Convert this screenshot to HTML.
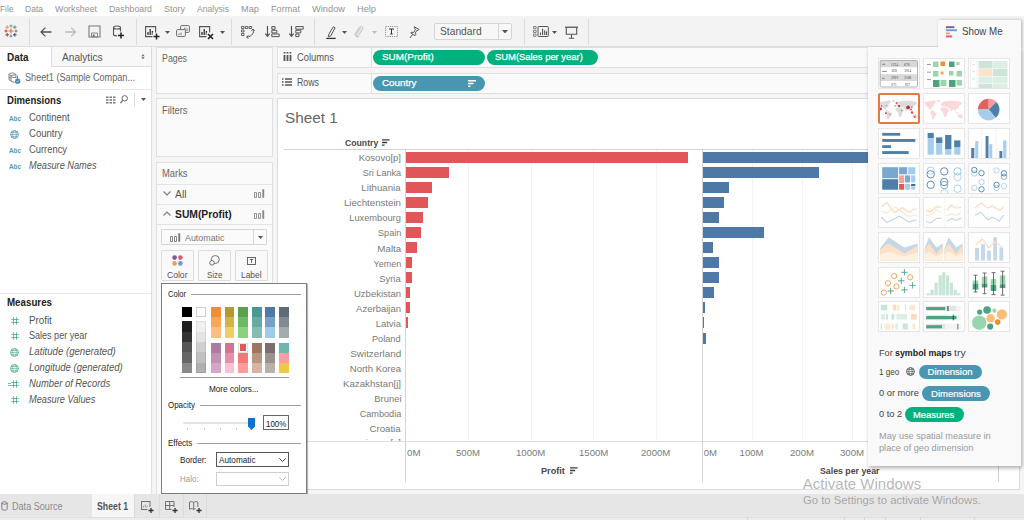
<!DOCTYPE html>
<html>
<head>
<meta charset="utf-8">
<title>Tableau - Sheet 1</title>
<style>
*{box-sizing:border-box;margin:0;padding:0}
html,body{width:1024px;height:520px;overflow:hidden;background:#fff}
body{font-family:"Liberation Sans",sans-serif;font-size:10px;color:#555;position:relative}
.a{position:absolute;display:block}
.t{position:absolute;white-space:nowrap;line-height:1;transform-origin:0 0;display:block}
</style>
</head>
<body>
<!-- s_top -->
<div class="a" style="left:0px;top:0px;width:1024px;height:16px;background:#fff;"></div>
<span class="t" style="top:4.06px;font-size:9.5px;color:#939393;left:0.00px;transform:scaleX(0.8819);">File</span>
<span class="t" style="top:4.06px;font-size:9.5px;color:#939393;left:25.00px;transform:scaleX(0.8970);">Data</span>
<span class="t" style="top:4.06px;font-size:9.5px;color:#939393;left:55.00px;transform:scaleX(0.9285);">Worksheet</span>
<span class="t" style="top:4.06px;font-size:9.5px;color:#939393;left:109.00px;transform:scaleX(0.9252);">Dashboard</span>
<span class="t" style="top:4.06px;font-size:9.5px;color:#939393;left:164.00px;transform:scaleX(0.9471);">Story</span>
<span class="t" style="top:4.06px;font-size:9.5px;color:#939393;left:197.00px;transform:scaleX(0.9046);">Analysis</span>
<span class="t" style="top:4.06px;font-size:9.5px;color:#939393;left:241.00px;transform:scaleX(0.9740);">Map</span>
<span class="t" style="top:4.06px;font-size:9.5px;color:#939393;left:271.00px;transform:scaleX(0.9639);">Format</span>
<span class="t" style="top:4.06px;font-size:9.5px;color:#939393;left:312.00px;transform:scaleX(0.9767);">Window</span>
<span class="t" style="top:4.06px;font-size:9.5px;color:#939393;left:357.00px;transform:scaleX(0.9724);">Help</span>
<div class="a" style="left:0px;top:16px;width:1024px;height:31px;background:#f3f3f3;"></div>
<div class="a" style="left:0px;top:46px;width:1021px;height:1px;background:#dedede;"></div>
<div class="a" style="left:29px;top:19px;width:1px;height:26px;background:#dcdcdc;"></div>
<div class="a" style="left:136px;top:19px;width:1px;height:26px;background:#dcdcdc;"></div>
<div class="a" style="left:231px;top:19px;width:1px;height:26px;background:#dcdcdc;"></div>
<div class="a" style="left:314px;top:19px;width:1px;height:26px;background:#dcdcdc;"></div>
<div class="a" style="left:524px;top:19px;width:1px;height:26px;background:#dcdcdc;"></div>
<div class="a" style="left:588px;top:19px;width:1px;height:26px;background:#dcdcdc;"></div>
<svg class="a" style="left:4px;top:24px;" width="14" height="14" viewBox="0 0 14 14"><path d="M4.4 7H9.6M7 4.4V9.6" stroke="#e8762d" stroke-width="1.2"/><path d="M5.5 2H8.5M7 0.5V3.5" stroke="#59879b" stroke-width="0.85"/><path d="M5.5 12H8.5M7 10.5V13.5" stroke="#59879b" stroke-width="0.85"/><path d="M0.5 7H3.5M2 5.5V8.5" stroke="#c72037" stroke-width="0.85"/><path d="M10.5 7H13.5M12 5.5V8.5" stroke="#5c6692" stroke-width="0.85"/><path d="M1.4000000000000001 3.2H5.0M3.2 1.4000000000000001V5.0" stroke="#eb9129" stroke-width="0.95"/><path d="M9.0 3.2H12.600000000000001M10.8 1.4000000000000001V5.0" stroke="#5b879b" stroke-width="0.95"/><path d="M1.4000000000000001 10.8H5.0M3.2 9.0V12.600000000000001" stroke="#c72037" stroke-width="0.95"/><path d="M9.0 10.8H12.600000000000001M10.8 9.0V12.600000000000001" stroke="#1f457e" stroke-width="0.95"/></svg>
<svg class="a" style="left:40px;top:27px;" width="13" height="10" viewBox="0 0 13 10"><path d="M11.5 5H1.2M5.4 0.6L1 5l4.4 4.4" fill="none" stroke="#555" stroke-width="1.3"/></svg>
<svg class="a" style="left:64px;top:27px;" width="13" height="10" viewBox="0 0 13 10"><path d="M11.5 5H1.2M5.4 0.6L1 5l4.4 4.4" fill="none" stroke="#bdbdbd" stroke-width="1.3" transform="translate(12.5,0) scale(-1,1)"/></svg>
<svg class="a" style="left:88px;top:25px;" width="13" height="13" viewBox="0 0 13 13"><path d="M1 1h11v11H1z" fill="none" stroke="#7a7a7a" stroke-width="1.1"/><path d="M3.5 8h6v4h-6z" fill="none" stroke="#7a7a7a" stroke-width="0.9"/><rect x="4.8" y="9.5" width="1.8" height="2" fill="#666"/></svg>
<svg class="a" style="left:112px;top:25px;" width="13" height="14" viewBox="0 0 13 14"><path d="M1.5 2.5c0-2 7-2 7 0v7.5c-1.5 1.2-5.5 1.2-7 0z M1.5 2.5c0 2 7 2 7 0" fill="none" stroke="#555" stroke-width="1.1"/><rect x="5" y="6.5" width="8" height="8" fill="#f3f3f3"/><path d="M6 10.5h6M9 7.5v6" stroke="#222" stroke-width="1.5"/></svg>
<svg class="a" style="left:145px;top:25.5px;" width="15" height="14" viewBox="0 0 15 14"><path d="M0.6 0.6h10v10h-10z" fill="none" stroke="#555" stroke-width="1.1"/><path d="M3 9V6M5.2 9V3M7.4 9V5" stroke="#333" stroke-width="1.3"/><rect x="7.5" y="6.5" width="8" height="8" fill="#f3f3f3"/><path d="M8.5 10.5h6M11.5 7.5v6" stroke="#222" stroke-width="1.5"/></svg>
<svg class="a" style="left:165px;top:30.5px;" width="5" height="3" viewBox="0 0 5 3"><path d="M0 0h5L2.5 3z" fill="#555"/></svg>
<svg class="a" style="left:176px;top:25px;" width="14" height="12" viewBox="0 0 14 12"><rect x="4.6" y="0.6" width="8.8" height="6.8" rx="1" fill="#f3f3f3" stroke="#6e6e6e" stroke-width="1"/><path d="M7 6V4M9 6V2.5M11 6V3.5" stroke="#6e6e6e" stroke-width="1"/><rect x="0.6" y="4.6" width="8.8" height="6.8" rx="1" fill="#f3f3f3" stroke="#6e6e6e" stroke-width="1"/><path d="M3 10V8.5M5 10V7.5" stroke="#777" stroke-width="1"/></svg>
<svg class="a" style="left:199px;top:25.5px;" width="15" height="14" viewBox="0 0 15 14"><path d="M0.6 0.6h10v10h-10z" fill="none" stroke="#555" stroke-width="1.1"/><path d="M3 9V6M5.2 9V3M7.4 9V5" stroke="#333" stroke-width="1.3"/><rect x="7.5" y="6.5" width="8" height="8" fill="#f3f3f3"/><path d="M9 8l5 5M14 8l-5 5" stroke="#222" stroke-width="1.6"/></svg>
<svg class="a" style="left:219.5px;top:30.5px;" width="5" height="3" viewBox="0 0 5 3"><path d="M0 0h5L2.5 3z" fill="#555"/></svg>
<svg class="a" style="left:241px;top:26px;" width="14" height="13" viewBox="0 0 14 13"><path d="M0.5 0.5h2.5v2h-2.5zM4.3 0.5h2.5v2h-2.5zM8.1 0.5h2.5v2h-2.5zM0.5 4h2.5v2h-2.5zM0.5 7.5h2.5v2h-2.5z" fill="none" stroke="#555" stroke-width="0.9"/><path d="M12 3.5c1.5 3-1 7-6 7.5" fill="none" stroke="#555" stroke-width="1"/><path d="M10.3 4.8L12 3l1.6 2M7.5 9.3L5.5 11l2 1.8" fill="none" stroke="#555" stroke-width="1"/></svg>
<svg class="a" style="left:265px;top:26px;" width="15" height="12" viewBox="0 0 15 12"><path d="M2.5 0v10M0.3 7.6L2.5 10.4 4.7 7.6" fill="none" stroke="#555" stroke-width="1.2"/><path d="M6.8 0.6h3.2v2.6H6.8zM6.8 4.3h5v2.6h-5zM6.8 8h7.4v2.6H6.8z" fill="none" stroke="#555" stroke-width="1"/></svg>
<svg class="a" style="left:289px;top:26px;" width="15" height="12" viewBox="0 0 15 12"><path d="M2.5 0v10M0.3 7.6L2.5 10.4 4.7 7.6" fill="none" stroke="#555" stroke-width="1.2"/><path d="M6.8 0.6h7.4v2.6H6.8zM6.8 4.3h5v2.6h-5zM6.8 8h3.2v2.6H6.8z" fill="none" stroke="#555" stroke-width="1"/></svg>
<svg class="a" style="left:326px;top:26px;" width="11" height="14" viewBox="0 0 11 14"><path d="M7.3 0.8l1.8 1-4.4 8.2-2.3 0.6 0.4-2.4z" fill="none" stroke="#555" stroke-width="1"/><path d="M0.3 12.4h9.4" stroke="#333" stroke-width="1.3"/></svg>
<svg class="a" style="left:342.2px;top:30.5px;" width="5" height="3" viewBox="0 0 5 3"><path d="M0 0h5L2.5 3z" fill="#555"/></svg>
<svg class="a" style="left:354px;top:25.5px;" width="11" height="12" viewBox="0 0 11 12"><path d="M7.6 2.6L3.2 9.2c-0.9 1.4 1 2.5 1.9 1.2l4-6.4c1.2-2-1.6-3.8-2.9-1.8L2 8.600c-1.700 2.800 2.200 5.100 3.900 2.400" fill="none" stroke="#bdbdbd" stroke-width="1" transform="translate(-0.5,-1.2)"/></svg>
<svg class="a" style="left:372.2px;top:30.5px;" width="5" height="3" viewBox="0 0 5 3"><path d="M0 0h5L2.5 3z" fill="#bdbdbd"/></svg>
<svg class="a" style="left:385px;top:26px;" width="13" height="11" viewBox="0 0 13 11"><rect x="0.5" y="0.5" width="12" height="10" fill="none" stroke="#888" stroke-width="0.9" stroke-dasharray="1.2 1"/><path d="M4 3h5M6.5 3v5M5.3 8h2.400" stroke="#333" stroke-width="1" fill="none"/></svg>
<svg class="a" style="left:408.5px;top:25.5px;" width="11" height="13" viewBox="0 0 11 13"><path d="M5.2 0.8l4.800 2.600-1 1.100-1-0.300-1.800 3 0.700 1.600-0.900 0.900L1.700 6.800l1.200-0.600 1.700 0.300 1.800-3-0.600-1z" fill="none" stroke="#555" stroke-width="1"/><path d="M3.700 8.200L1 12" stroke="#555" stroke-width="1"/></svg>
<div class="a" style="left:434px;top:22.5px;width:78px;height:17.5px;background:#f7f7f7;border:1px solid #d4d4d4;border-radius:2px;"></div>
<div class="a" style="left:498px;top:23px;width:1px;height:16.5px;background:#d4d4d4;"></div>
<span class="t" style="top:26.49px;font-size:11px;color:#555;left:440.00px;transform:scaleX(0.9318);">Standard</span>
<svg class="a" style="left:502.3px;top:29.8px;" width="6" height="3.5" viewBox="0 0 6 3.5"><path d="M0 0h6L3 3.500z" fill="#555"/></svg>
<svg class="a" style="left:533px;top:26px;" width="16" height="11" viewBox="0 0 16 11"><path d="M0.500 0.500h2.600v2.200H0.500zM0.500 4.300h2.600v2.200H0.500zM0.500 8.100h2.600v2.200H0.500z" fill="none" stroke="#777" stroke-width="0.900"/><rect x="5" y="0.500" width="10.300" height="10" rx="0.800" fill="none" stroke="#555" stroke-width="1"/><path d="M7.500 9V6.500M9.600 9V2.800M11.700 9V4.300M13.500 9V5.500" stroke="#555" stroke-width="1.100"/></svg>
<svg class="a" style="left:552.3px;top:30.5px;" width="5" height="3" viewBox="0 0 5 3"><path d="M0 0h5L2.5 3z" fill="#555"/></svg>
<svg class="a" style="left:564.5px;top:25.5px;" width="13" height="13" viewBox="0 0 13 13"><path d="M0 1.200h13" stroke="#555" stroke-width="1.300"/><path d="M1.300 1.500v6.800h10.400V1.500" fill="none" stroke="#555" stroke-width="1.100"/><path d="M6.500 8.300v3.700M3.800 12.300h5.400" stroke="#555" stroke-width="1.100"/></svg>
<!-- s_left -->
<div class="a" style="left:0px;top:47px;width:152px;height:447px;background:#fff;border-right:1px solid #e0e0e0;"></div>
<div class="a" style="left:51px;top:47px;width:101px;height:20px;background:#f8f8f8;border-left:1px solid #dcdcdc;border-bottom:1px solid #dcdcdc;border-right:1px solid #dcdcdc;"></div>
<span class="t" style="top:52.64px;font-size:10px;color:#222;font-weight:bold;left:7.00px;transform:scaleX(0.9919);">Data</span>
<span class="t" style="top:52.64px;font-size:10px;color:#555;left:61.50px;transform:scaleX(1.0121);">Analytics</span>
<svg class="a" style="left:141.2px;top:53.7px;" width="4" height="6" viewBox="0 0 4 6"><path d="M2 0.200L3.700 2.300H0.300zM2 5.300L3.700 3.200H0.300z" fill="#666"/></svg>
<svg class="a" style="left:8px;top:71.5px;" width="13" height="12" viewBox="0 0 13 12"><path d="M1 2.300c0-1.700 6.500-1.700 6.500 0v5.500c-1.500 1.200-5 1.200-6.500 0zM1 2.300c0 1.600 6.500 1.600 6.500 0M1 5c0 1.500 6.500 1.500 6.500 0" fill="none" stroke="#777" stroke-width="0.900"/><path d="M3 4.300c0-1.700 6.500-1.700 6.500 0v5c-1.500 1.200-5 1.200-6.500 0zM3 4.300c0 1.600 6.500 1.600 6.500 0" fill="#fff" stroke="#777" stroke-width="0.900"/><circle cx="9.700" cy="9.200" r="2.600" fill="#3a87b5"/><path d="M8.500 9.200l0.900 0.900 1.500-1.700" fill="none" stroke="#fff" stroke-width="0.700"/></svg>
<span class="t" style="top:72.83px;font-size:10px;color:#666;left:25.00px;transform:scaleX(0.9119);">Sheet1 (Sample Compan...</span>
<div class="a" style="left:0px;top:89px;width:151px;height:1px;background:#e8e8e8;"></div>
<span class="t" style="top:95.73px;font-size:10px;color:#222;font-weight:bold;left:7.00px;transform:scaleX(0.9571);">Dimensions</span>
<svg class="a" style="left:105.5px;top:95.6px;" width="10" height="8" viewBox="0 0 10 8"><path d="M0 0.500h2.500v1.500H0zM3.500 0.500h2.500v1.500h-2.500zM7 0.500h2.500v1.500H7zM0 3.300h2.500v1.500H0zM3.500 3.300h2.500v1.500h-2.500zM7 3.300h2.500v1.500H7zM0 6.100h2.500v1.500H0zM3.500 6.100h2.500v1.500h-2.500zM7 6.100h2.500v1.500H7z" fill="#777"/></svg>
<svg class="a" style="left:120.2px;top:94.9px;" width="8" height="9" viewBox="0 0 8 9"><circle cx="4.700" cy="3.300" r="2.700" fill="none" stroke="#666" stroke-width="1"/><path d="M2.800 5.300L0.500 8" stroke="#666" stroke-width="1.200"/></svg>
<div class="a" style="left:134px;top:93px;width:1px;height:14px;background:#dcdcdc;"></div>
<svg class="a" style="left:140.5px;top:98px;" width="5" height="3" viewBox="0 0 5 3"><path d="M0 0h5L2.500 3z" fill="#555"/></svg>
<span class="t" style="top:115.05px;font-size:7.5px;color:#4e9bb5;font-weight:bold;left:9.30px;transform:scaleX(0.8469);">Abc</span>
<span class="t" style="top:113.23px;font-size:10px;color:#555;left:28.75px;transform:scaleX(0.9519);">Continent</span>
<svg class="a" style="left:10px;top:129.7px;" width="9" height="9" viewBox="0 0 9 9"><circle cx="4.5" cy="4.5" r="3.9" fill="none" stroke="#4e9bb5" stroke-width="0.9"/><ellipse cx="4.5" cy="4.5" rx="1.8" ry="3.9" fill="none" stroke="#4e9bb5" stroke-width="0.65"/><path d="M0.6 4.5h7.8M1.200 2.400h6.600M1.200 6.600h6.600" stroke="#4e9bb5" stroke-width="0.600"/></svg>
<span class="t" style="top:129.23px;font-size:10px;color:#555;left:28.75px;transform:scaleX(0.9567);">Country</span>
<span class="t" style="top:146.80px;font-size:7.5px;color:#4e9bb5;font-weight:bold;left:9.30px;transform:scaleX(0.8469);">Abc</span>
<span class="t" style="top:144.98px;font-size:10px;color:#555;left:28.75px;transform:scaleX(0.9367);">Currency</span>
<span class="t" style="top:162.55px;font-size:7.5px;color:#4e9bb5;font-weight:bold;left:9.30px;transform:scaleX(0.8469);">Abc</span>
<span class="t" style="top:160.73px;font-size:10px;color:#555;font-style:italic;left:28.75px;transform:scaleX(0.9201);">Measure Names</span>
<div class="a" style="left:0px;top:293px;width:151px;height:1px;background:#e8e8e8;"></div>
<span class="t" style="top:297.99px;font-size:10px;color:#222;font-weight:bold;left:7.00px;transform:scaleX(0.9753);">Measures</span>
<svg class="a" style="left:11px;top:316.5px;" width="8" height="8" viewBox="0 0 8 8"><path d="M2.500 0.300v7.400M5.500 0.300v7.400M0.300 2.500h7.400M0.300 5.500h7.400" stroke="#4eb08f" stroke-width="0.850"/></svg>
<span class="t" style="top:315.54px;font-size:10px;color:#555;left:28.75px;transform:scaleX(0.9747);">Profit</span>
<svg class="a" style="left:11px;top:332.34999999999997px;" width="8" height="8" viewBox="0 0 8 8"><path d="M2.500 0.300v7.400M5.500 0.300v7.400M0.300 2.500h7.400M0.300 5.500h7.400" stroke="#4eb08f" stroke-width="0.850"/></svg>
<span class="t" style="top:331.38px;font-size:10px;color:#555;left:28.75px;transform:scaleX(0.9034);">Sales per year</span>
<svg class="a" style="left:10px;top:347.7px;" width="9" height="9" viewBox="0 0 9 9"><circle cx="4.5" cy="4.5" r="3.9" fill="none" stroke="#4eb08f" stroke-width="0.9"/><ellipse cx="4.5" cy="4.5" rx="1.8" ry="3.9" fill="none" stroke="#4eb08f" stroke-width="0.65"/><path d="M0.6 4.5h7.8M1.200 2.400h6.600M1.200 6.600h6.600" stroke="#4eb08f" stroke-width="0.600"/></svg>
<span class="t" style="top:347.24px;font-size:10px;color:#555;font-style:italic;left:28.75px;transform:scaleX(0.9632);">Latitude (generated)</span>
<svg class="a" style="left:10px;top:363.55px;" width="9" height="9" viewBox="0 0 9 9"><circle cx="4.5" cy="4.5" r="3.9" fill="none" stroke="#4eb08f" stroke-width="0.9"/><ellipse cx="4.5" cy="4.5" rx="1.8" ry="3.9" fill="none" stroke="#4eb08f" stroke-width="0.65"/><path d="M0.6 4.5h7.8M1.200 2.400h6.600M1.200 6.600h6.600" stroke="#4eb08f" stroke-width="0.600"/></svg>
<span class="t" style="top:363.09px;font-size:10px;color:#555;font-style:italic;left:28.75px;transform:scaleX(0.9526);">Longitude (generated)</span>
<svg class="a" style="left:11px;top:379.9px;" width="8" height="8" viewBox="0 0 8 8"><path d="M2.500 0.300v7.400M5.500 0.300v7.400M0.300 2.500h7.400M0.300 5.500h7.400" stroke="#4eb08f" stroke-width="0.850"/></svg>
<svg class="a" style="left:8px;top:382.9px;" width="3" height="3" viewBox="0 0 3 3"><path d="M0 0.500h3M0 2.500h3" stroke="#4eb08f" stroke-width="0.800"/></svg>
<span class="t" style="top:378.94px;font-size:10px;color:#555;font-style:italic;left:28.75px;transform:scaleX(0.9371);">Number of Records</span>
<svg class="a" style="left:11px;top:395.75px;" width="8" height="8" viewBox="0 0 8 8"><path d="M2.500 0.300v7.400M5.500 0.300v7.400M0.300 2.500h7.400M0.300 5.500h7.400" stroke="#4eb08f" stroke-width="0.850"/></svg>
<span class="t" style="top:394.79px;font-size:10px;color:#555;font-style:italic;left:28.75px;transform:scaleX(0.9215);">Measure Values</span>
<!-- s_cards -->
<div class="a" style="left:152px;top:47px;width:872px;height:447px;background:#f5f5f5;"></div>
<div class="a" style="left:156px;top:47px;width:117px;height:46.5px;background:#fafafa;border:1px solid #e0e0e0;"></div>
<span class="t" style="top:53.53px;font-size:10px;color:#666;left:161.75px;transform:scaleX(0.8817);">Pages</span>
<div class="a" style="left:156px;top:98px;width:117px;height:59px;background:#fafafa;border:1px solid #e0e0e0;"></div>
<span class="t" style="top:105.53px;font-size:10px;color:#666;left:161.75px;transform:scaleX(0.9367);">Filters</span>
<div class="a" style="left:156px;top:161.5px;width:117px;height:335px;background:#fafafa;border:1px solid #e0e0e0;"></div>
<span class="t" style="top:168.53px;font-size:10px;color:#666;left:161.75px;transform:scaleX(0.9367);">Marks</span>
<div class="a" style="left:157px;top:184px;width:115px;height:1px;background:#e4e4e4;"></div>
<div class="a" style="left:157px;top:204px;width:115px;height:1px;background:#e4e4e4;"></div>
<div class="a" style="left:157px;top:224px;width:115px;height:1px;background:#e4e4e4;"></div>
<svg class="a" style="left:163px;top:190.5px;" width="8" height="5" viewBox="0 0 8 5"><path d="M0.500 0.500L4 4l3.500-3.500" fill="none" stroke="#7c7c7c" stroke-width="1.100"/></svg>
<span class="t" style="top:189.11px;font-size:10.5px;color:#555;left:175.00px;transform:scaleX(0.9855);">All</span>
<svg class="a" style="left:254px;top:189px;" width="11" height="9" viewBox="0 0 11 9"><path d="M0.500 3.500h2v5h-2zM4.500 3.500h2v5h-2z" fill="none" stroke="#888" stroke-width="0.900"/><path d="M8.300 0.300h1.900v8.400h-1.900z" fill="#888" stroke="none"/></svg>
<svg class="a" style="left:163px;top:211px;" width="8" height="5" viewBox="0 0 8 5"><path d="M0.500 4.500L4 1l3.500 3.500" fill="none" stroke="#7c7c7c" stroke-width="1.100"/></svg>
<span class="t" style="top:209.41px;font-size:10.5px;color:#222;font-weight:bold;left:175.00px;transform:scaleX(0.9828);">SUM(Profit)</span>
<svg class="a" style="left:254px;top:209.5px;" width="11" height="9" viewBox="0 0 11 9"><path d="M0.500 3.500h2v5h-2zM4.500 3.500h2v5h-2z" fill="none" stroke="#888" stroke-width="0.900"/><path d="M8.300 0.300h1.900v8.400h-1.900z" fill="#888" stroke="none"/></svg>
<div class="a" style="left:161px;top:229px;width:106px;height:16px;background:#fbfbfb;border:1px solid #d6d6d6;border-radius:1px;"></div>
<div class="a" style="left:253px;top:229.5px;width:1px;height:15px;background:#d6d6d6;"></div>
<svg class="a" style="left:169.5px;top:233px;" width="11" height="9" viewBox="0 0 11 9"><path d="M0.500 3.500h2v5h-2zM4.500 3.500h2v5h-2z" fill="none" stroke="#777" stroke-width="0.900"/><path d="M8.300 0.300h1.900v8.400h-1.900z" fill="#777" stroke="none"/></svg>
<span class="t" style="top:232.96px;font-size:9.5px;color:#777;left:184.50px;transform:scaleX(0.9351);">Automatic</span>
<svg class="a" style="left:257.5px;top:236px;" width="5" height="3" viewBox="0 0 5 3"><path d="M0 0h5L2.500 3z" fill="#555"/></svg>
<div class="a" style="left:161px;top:250px;width:32.5px;height:31px;background:#f9f9f9;border:1px solid #dddddd;border-radius:1px;"></div>
<span class="t" style="top:269.76px;font-size:9.5px;color:#555;left:167.00px;transform:scaleX(0.9030);">Color</span>
<div class="a" style="left:198px;top:250px;width:32.5px;height:31px;background:#f9f9f9;border:1px solid #dddddd;border-radius:1px;"></div>
<span class="t" style="top:269.76px;font-size:9.5px;color:#555;left:206.50px;transform:scaleX(0.8387);">Size</span>
<div class="a" style="left:235px;top:250px;width:32.5px;height:31px;background:#f9f9f9;border:1px solid #dddddd;border-radius:1px;"></div>
<span class="t" style="top:269.76px;font-size:9.5px;color:#555;left:241.00px;transform:scaleX(0.8819);">Label</span>
<svg class="a" style="left:171.5px;top:254.5px;" width="11" height="11" viewBox="0 0 11 11"><circle cx="2.600" cy="2.600" r="2.300" fill="#7e5a93"/><circle cx="8.400" cy="2.600" r="2.300" fill="#e0567a"/><circle cx="2.600" cy="8.400" r="2.300" fill="#ee9a5e"/><circle cx="8.400" cy="8.400" r="2.300" fill="#6c9bd0"/></svg>
<svg class="a" style="left:208.5px;top:255px;" width="11" height="11" viewBox="0 0 11 11"><circle cx="6.300" cy="4.500" r="4" fill="none" stroke="#666" stroke-width="0.900"/><circle cx="3" cy="7.800" r="2.300" fill="#f9f9f9" stroke="#666" stroke-width="0.900"/></svg>
<svg class="a" style="left:246.5px;top:256.5px;" width="9" height="8" viewBox="0 0 9 8"><rect x="0.500" y="0.500" width="8" height="7" fill="none" stroke="#555" stroke-width="0.900"/><path d="M2.800 2.500h3.400M4.500 2.500v3.300" stroke="#555" stroke-width="0.900"/></svg>
<div class="a" style="left:277px;top:47px;width:743px;height:20.5px;background:#fafafa;border:1px solid #e0e0e0;"></div>
<div class="a" style="left:371px;top:48px;width:1px;height:18.5px;background:#e0e0e0;"></div>
<span class="t" style="top:52.73px;font-size:10px;color:#555;left:296.50px;transform:scaleX(0.9377);">Columns</span>
<div class="a" style="left:277px;top:72.5px;width:743px;height:21px;background:#fafafa;border:1px solid #e0e0e0;"></div>
<div class="a" style="left:371px;top:73.5px;width:1px;height:19px;background:#e0e0e0;"></div>
<span class="t" style="top:78.23px;font-size:10px;color:#555;left:296.50px;transform:scaleX(0.8798);">Rows</span>
<svg class="a" style="left:282.5px;top:51.5px;" width="9" height="9" viewBox="0 0 9 9"><path d="M1.500 0v1.500M4.500 0v1.500M7.500 0v1.500" stroke="#555" stroke-width="1.800"/><path d="M1.500 3v6M4.500 3v6M7.500 3v6" stroke="#555" stroke-width="1.800"/></svg>
<svg class="a" style="left:282px;top:78.3px;" width="10" height="8" viewBox="0 0 10 8"><path d="M0 1h1.500M0 4h1.500M0 7h1.500" stroke="#555" stroke-width="1.600"/><path d="M3 1h7M3 4h7M3 7h7" stroke="#555" stroke-width="1.600"/></svg>
<div class="a" style="left:373.3px;top:49.7px;width:112px;height:15px;background:#00b180;border-radius:7.500px;"></div>
<span class="t" style="top:52.40px;font-size:9.8px;color:#fff;left:381.60px;transform:scaleX(1.0102);-webkit-text-stroke:0.25px #fff;">SUM(Profit)</span>
<div class="a" style="left:486.8px;top:49.7px;width:111.7px;height:15px;background:#00b180;border-radius:7.500px;"></div>
<span class="t" style="top:52.40px;font-size:9.8px;color:#fff;left:494.50px;transform:scaleX(0.9596);-webkit-text-stroke:0.25px #fff;">SUM(Sales per year)</span>
<div class="a" style="left:373.3px;top:75.8px;width:112px;height:15px;background:#4996b2;border-radius:7.500px;"></div>
<span class="t" style="top:78.40px;font-size:9.8px;color:#fff;left:381.60px;transform:scaleX(1.0054);-webkit-text-stroke:0.25px #fff;">Country</span>
<svg class="a" style="left:468px;top:80px;" width="8" height="7" viewBox="0 0 8 7"><path d="M0 0.800h8M0 3.500h5.500M0 6.200h2.500" stroke="#fff" stroke-width="1.400"/></svg>
<!-- s_view -->
<div class="a" style="left:277px;top:98px;width:743px;height:392px;background:#fff;border:1px solid #dcdcdc;"></div>
<span class="t" style="top:110.40px;font-size:15px;color:#666;left:285.30px;transform:scaleX(1.0191);">Sheet 1</span>
<span class="t" style="top:138.06px;font-size:9.5px;color:#484848;font-weight:bold;left:345.00px;transform:scaleX(0.9117);">Country</span>
<svg class="a" style="left:381.8px;top:138.7px;" width="8" height="7" viewBox="0 0 8 7"><path d="M0 0.800h7.600M0 3.500h5.200M0 6.200h2.600" stroke="#3c3c3c" stroke-width="1.300"/></svg>
<div class="a" style="left:284px;top:149px;width:736px;height:1px;background:#d4d4d4;"></div>
<div class="a" style="left:284px;top:441px;width:736px;height:1px;background:#dedede;"></div>
<div class="a" style="left:468px;top:150px;width:1px;height:291px;background:#f3f3f3;"></div>
<div class="a" style="left:531px;top:150px;width:1px;height:291px;background:#f3f3f3;"></div>
<div class="a" style="left:593px;top:150px;width:1px;height:291px;background:#f3f3f3;"></div>
<div class="a" style="left:656px;top:150px;width:1px;height:291px;background:#f3f3f3;"></div>
<div class="a" style="left:752px;top:150px;width:1px;height:291px;background:#f3f3f3;"></div>
<div class="a" style="left:802px;top:150px;width:1px;height:291px;background:#f3f3f3;"></div>
<div class="a" style="left:852px;top:150px;width:1px;height:291px;background:#f3f3f3;"></div>
<div class="a" style="left:903px;top:150px;width:1px;height:291px;background:#f3f3f3;"></div>
<div class="a" style="left:953px;top:150px;width:1px;height:291px;background:#f3f3f3;"></div>
<div class="a" style="left:405px;top:150px;width:1px;height:332px;background:#d4d4d4;"></div>
<div class="a" style="left:702px;top:150px;width:1px;height:332px;background:#d4d4d4;"></div>
<div class="a" style="left:998px;top:466px;width:1px;height:16px;background:#cfcfcf;"></div>
<span class="t" style="top:153.21px;font-size:9.5px;color:#7a7a7a;right:623.00px;transform-origin:100% 0;">Kosovo[p]</span>
<div class="a" style="left:406px;top:151.8px;width:281.6px;height:11px;background:#e15759;"></div>
<div class="a" style="left:703px;top:151.8px;width:307px;height:11px;background:#4e79a7;"></div>
<span class="t" style="top:168.26px;font-size:9.5px;color:#7a7a7a;right:623.00px;transform-origin:100% 0;transform:scaleX(0.9568);">Sri Lanka</span>
<div class="a" style="left:406px;top:166.9px;width:42.8px;height:11px;background:#e15759;"></div>
<div class="a" style="left:703px;top:166.9px;width:116.4px;height:11px;background:#4e79a7;"></div>
<span class="t" style="top:183.31px;font-size:9.5px;color:#7a7a7a;right:623.00px;transform-origin:100% 0;transform:scaleX(1.0165);">Lithuania</span>
<div class="a" style="left:406px;top:181.9px;width:26.2px;height:11px;background:#e15759;"></div>
<div class="a" style="left:703px;top:181.9px;width:26px;height:11px;background:#4e79a7;"></div>
<span class="t" style="top:198.36px;font-size:9.5px;color:#7a7a7a;right:623.00px;transform-origin:100% 0;transform:scaleX(1.0199);">Liechtenstein</span>
<div class="a" style="left:406px;top:197.0px;width:21.7px;height:11px;background:#e15759;"></div>
<div class="a" style="left:703px;top:197.0px;width:21.3px;height:11px;background:#4e79a7;"></div>
<span class="t" style="top:213.41px;font-size:9.5px;color:#7a7a7a;right:623.00px;transform-origin:100% 0;transform:scaleX(0.9770);">Luxembourg</span>
<div class="a" style="left:406px;top:212.1px;width:16.5px;height:11px;background:#e15759;"></div>
<div class="a" style="left:703px;top:212.1px;width:16px;height:11px;background:#4e79a7;"></div>
<span class="t" style="top:228.46px;font-size:9.5px;color:#7a7a7a;right:623.00px;transform-origin:100% 0;transform:scaleX(0.9589);">Spain</span>
<div class="a" style="left:406px;top:227.1px;width:15px;height:11px;background:#e15759;"></div>
<div class="a" style="left:703px;top:227.1px;width:60.5px;height:11px;background:#4e79a7;"></div>
<span class="t" style="top:243.51px;font-size:9.5px;color:#7a7a7a;right:623.00px;transform-origin:100% 0;transform:scaleX(1.0288);">Malta</span>
<div class="a" style="left:406px;top:242.2px;width:10.5px;height:11px;background:#e15759;"></div>
<div class="a" style="left:703px;top:242.2px;width:10px;height:11px;background:#4e79a7;"></div>
<span class="t" style="top:258.56px;font-size:9.5px;color:#7a7a7a;right:623.00px;transform-origin:100% 0;transform:scaleX(0.9477);">Yemen</span>
<div class="a" style="left:406px;top:257.2px;width:6px;height:11px;background:#e15759;"></div>
<div class="a" style="left:703px;top:257.2px;width:16px;height:11px;background:#4e79a7;"></div>
<span class="t" style="top:273.61px;font-size:9.5px;color:#7a7a7a;right:623.00px;transform-origin:100% 0;transform:scaleX(0.9841);">Syria</span>
<div class="a" style="left:406px;top:272.2px;width:6px;height:11px;background:#e15759;"></div>
<div class="a" style="left:703px;top:272.2px;width:16px;height:11px;background:#4e79a7;"></div>
<span class="t" style="top:288.66px;font-size:9.5px;color:#7a7a7a;right:623.00px;transform-origin:100% 0;">Uzbekistan</span>
<div class="a" style="left:406px;top:287.3px;width:3.8px;height:11px;background:#e15759;"></div>
<div class="a" style="left:703px;top:287.3px;width:10.8px;height:11px;background:#4e79a7;"></div>
<span class="t" style="top:303.71px;font-size:9.5px;color:#7a7a7a;right:623.00px;transform-origin:100% 0;">Azerbaijan</span>
<div class="a" style="left:406px;top:302.4px;width:3.8px;height:11px;background:#e15759;"></div>
<div class="a" style="left:703px;top:302.4px;width:1.5px;height:11px;background:#4e79a7;"></div>
<span class="t" style="top:318.76px;font-size:9.5px;color:#7a7a7a;right:623.00px;transform-origin:100% 0;">Latvia</span>
<div class="a" style="left:406px;top:317.4px;width:1.5px;height:11px;background:#e15759;"></div>
<div class="a" style="left:703px;top:317.4px;width:0.8px;height:11px;background:#4e79a7;"></div>
<span class="t" style="top:333.81px;font-size:9.5px;color:#7a7a7a;right:623.00px;transform-origin:100% 0;transform:scaleX(0.9668);">Poland</span>
<div class="a" style="left:406px;top:332.5px;width:0px;height:11px;background:#e15759;"></div>
<div class="a" style="left:703px;top:332.5px;width:3px;height:11px;background:#4e79a7;"></div>
<span class="t" style="top:348.86px;font-size:9.5px;color:#7a7a7a;right:623.00px;transform-origin:100% 0;transform:scaleX(1.0345);">Switzerland</span>
<span class="t" style="top:363.91px;font-size:9.5px;color:#7a7a7a;right:623.00px;transform-origin:100% 0;">North Korea</span>
<span class="t" style="top:378.96px;font-size:9.5px;color:#7a7a7a;right:623.00px;transform-origin:100% 0;transform:scaleX(1.0169);">Kazakhstan[j]</span>
<span class="t" style="top:394.01px;font-size:9.5px;color:#7a7a7a;right:623.00px;transform-origin:100% 0;transform:scaleX(0.9868);">Brunei</span>
<span class="t" style="top:409.06px;font-size:9.5px;color:#7a7a7a;right:623.00px;transform-origin:100% 0;transform:scaleX(0.9607);">Cambodia</span>
<span class="t" style="top:424.11px;font-size:9.5px;color:#7a7a7a;right:623.00px;transform-origin:100% 0;transform:scaleX(1.0188);">Croatia</span>
<div class="a" style="left:340px;top:436px;width:64px;height:5px;overflow:hidden;"><span class="t" style="right:3px;top:2.300px;font-size:9.500px;color:#7a7a7a;transform-origin:100% 0;transform:scaleX(0.98)">jersey[o]</span></div>
<span class="t" style="top:447.56px;font-size:9.5px;color:#7a7a7a;left:406.80px;transform:scaleX(1.0229);">0M</span>
<span class="t" style="top:447.56px;font-size:9.5px;color:#7a7a7a;left:455.80px;transform:scaleX(1.0057);">500M</span>
<span class="t" style="top:447.56px;font-size:9.5px;color:#7a7a7a;left:515.90px;transform:scaleX(1.0087);">1000M</span>
<span class="t" style="top:447.56px;font-size:9.5px;color:#7a7a7a;left:578.70px;transform:scaleX(1.0087);">1500M</span>
<span class="t" style="top:447.56px;font-size:9.5px;color:#7a7a7a;left:641.00px;transform:scaleX(1.0087);">2000M</span>
<span class="t" style="top:447.56px;font-size:9.5px;color:#7a7a7a;left:703.70px;">0M</span>
<span class="t" style="top:447.56px;font-size:9.5px;color:#7a7a7a;left:739.60px;">100M</span>
<span class="t" style="top:447.56px;font-size:9.5px;color:#7a7a7a;left:790.00px;transform:scaleX(1.0141);">200M</span>
<span class="t" style="top:447.56px;font-size:9.5px;color:#7a7a7a;left:840.10px;transform:scaleX(1.0141);">300M</span>
<span class="t" style="top:465.96px;font-size:9.5px;color:#484848;font-weight:bold;left:541.30px;transform:scaleX(0.9636);">Profit</span>
<svg class="a" style="left:570px;top:466.8px;" width="8" height="7" viewBox="0 0 8 7"><path d="M0 0.800h7.600M0 3.500h5.200M0 6.200h2.600" stroke="#3c3c3c" stroke-width="1.300"/></svg>
<span class="t" style="top:465.96px;font-size:9.5px;color:#484848;font-weight:bold;left:820.20px;transform:scaleX(0.9234);">Sales per year</span>
<!-- s_popup -->
<div class="a" style="left:161px;top:283px;width:146px;height:211px;background:#fff;border:1px solid #7c7c7c;box-shadow:1px 1px 1px rgba(0,0,0,0.28);"></div>
<span class="t" style="top:290.38px;font-size:9px;color:#222;left:167.80px;transform:scaleX(0.8416);">Color</span>
<div class="a" style="left:191px;top:294px;width:110px;height:1px;background:#a0a0a0;"></div>
<div class="a" style="left:182.3px;top:307px;width:9.8px;height:10px;background:#000;"></div>
<div class="a" style="left:195.6px;top:307px;width:10.2px;height:10px;background:#fff;border:1px solid #d0d0d0;"></div>
<div class="a" style="left:182.3px;top:321.3px;width:9.8px;height:10.4px;background:#1e1e1e;"></div>
<div class="a" style="left:195.6px;top:321.3px;width:10.2px;height:10.4px;background:#f0f0f0;"></div>
<div class="a" style="left:182.3px;top:331.6px;width:9.8px;height:10.4px;background:#333333;"></div>
<div class="a" style="left:195.6px;top:331.6px;width:10.2px;height:10.4px;background:#e4e4e4;"></div>
<div class="a" style="left:182.3px;top:341.9px;width:9.8px;height:10.4px;background:#555555;"></div>
<div class="a" style="left:195.6px;top:341.9px;width:10.2px;height:10.4px;background:#d0d0d0;"></div>
<div class="a" style="left:182.3px;top:352.2px;width:9.8px;height:10.4px;background:#666666;"></div>
<div class="a" style="left:195.6px;top:352.2px;width:10.2px;height:10.4px;background:#c0c0c0;"></div>
<div class="a" style="left:182.3px;top:362.5px;width:9.8px;height:10.4px;background:#888888;"></div>
<div class="a" style="left:195.6px;top:362.5px;width:10.2px;height:10.4px;background:#b0b0b0;"></div>
<div class="a" style="left:195.6px;top:321.3px;width:10.2px;height:51.5px;border:1px solid rgba(0,0,0,0.08);"></div>
<div class="a" style="left:210.9px;top:307.0px;width:9.8px;height:10.3px;background:#f28e2b;"></div>
<div class="a" style="left:210.9px;top:342.6px;width:9.8px;height:10.3px;background:#b07aa1;"></div>
<div class="a" style="left:210.9px;top:317.17px;width:9.8px;height:10.3px;background:#f9a655;"></div>
<div class="a" style="left:210.9px;top:352.7px;width:9.8px;height:10.3px;background:#c292b5;"></div>
<div class="a" style="left:210.9px;top:327.34px;width:9.8px;height:10.3px;background:#ffbe7d;"></div>
<div class="a" style="left:210.9px;top:362.8px;width:9.8px;height:10.3px;background:#d4a6c8;"></div>
<div class="a" style="left:224.5px;top:307.0px;width:9.8px;height:10.3px;background:#b6992d;"></div>
<div class="a" style="left:224.5px;top:342.6px;width:9.8px;height:10.3px;background:#d37295;"></div>
<div class="a" style="left:224.5px;top:317.17px;width:9.8px;height:10.3px;background:#d3b348;"></div>
<div class="a" style="left:224.5px;top:352.7px;width:9.8px;height:10.3px;background:#e78fae;"></div>
<div class="a" style="left:224.5px;top:327.34px;width:9.8px;height:10.3px;background:#f1ce63;"></div>
<div class="a" style="left:224.5px;top:362.8px;width:9.8px;height:10.3px;background:#fabfd2;"></div>
<div class="a" style="left:238.1px;top:307.0px;width:9.8px;height:10.3px;background:#59a14f;"></div>
<div class="a" style="left:238.1px;top:342.6px;width:9.8px;height:10.3px;background:#e15759;"></div>
<div class="a" style="left:238.1px;top:317.17px;width:9.8px;height:10.3px;background:#6fb966;"></div>
<div class="a" style="left:238.1px;top:352.7px;width:9.8px;height:10.3px;background:#f07b79;"></div>
<div class="a" style="left:238.1px;top:327.34px;width:9.8px;height:10.3px;background:#8cd17d;"></div>
<div class="a" style="left:238.1px;top:362.8px;width:9.8px;height:10.3px;background:#ff9d9a;"></div>
<div class="a" style="left:251.8px;top:307.0px;width:9.8px;height:10.3px;background:#499894;"></div>
<div class="a" style="left:251.8px;top:342.6px;width:9.8px;height:10.3px;background:#9d7660;"></div>
<div class="a" style="left:251.8px;top:317.17px;width:9.8px;height:10.3px;background:#69aaa5;"></div>
<div class="a" style="left:251.8px;top:352.7px;width:9.8px;height:10.3px;background:#ba9582;"></div>
<div class="a" style="left:251.8px;top:327.34px;width:9.8px;height:10.3px;background:#86bcb6;"></div>
<div class="a" style="left:251.8px;top:362.8px;width:9.8px;height:10.3px;background:#d7b5a6;"></div>
<div class="a" style="left:265.3px;top:307.0px;width:9.8px;height:10.3px;background:#4e79a7;"></div>
<div class="a" style="left:265.3px;top:342.6px;width:9.8px;height:10.3px;background:#79706e;"></div>
<div class="a" style="left:265.3px;top:317.17px;width:9.8px;height:10.3px;background:#77a0c9;"></div>
<div class="a" style="left:265.3px;top:352.7px;width:9.8px;height:10.3px;background:#9a9290;"></div>
<div class="a" style="left:265.3px;top:327.34px;width:9.8px;height:10.3px;background:#a0cbe8;"></div>
<div class="a" style="left:265.3px;top:362.8px;width:9.8px;height:10.3px;background:#bab0ac;"></div>
<div class="a" style="left:278.9px;top:307.0px;width:9.8px;height:10.3px;background:#5f6b78;"></div>
<div class="a" style="left:278.9px;top:342.6px;width:9.8px;height:10.3px;background:#6eb5ab;"></div>
<div class="a" style="left:278.9px;top:317.17px;width:9.8px;height:10.3px;background:#7f8a92;"></div>
<div class="a" style="left:278.9px;top:352.7px;width:9.8px;height:10.3px;background:#ff9da7;"></div>
<div class="a" style="left:278.9px;top:327.34px;width:9.8px;height:10.3px;background:#a3abaa;"></div>
<div class="a" style="left:278.9px;top:362.8px;width:9.8px;height:10.3px;background:#edc948;"></div>
<div class="a" style="left:238.1px;top:342.6px;width:9.8px;height:10.3px;background:#fff;border:1px solid #e0e0e0;"></div>
<div class="a" style="left:239.6px;top:344.1px;width:6.8px;height:7.3px;background:#e15759;"></div>
<div class="a" style="left:179.7px;top:376.5px;width:109.3px;height:1px;background:#9a9a9a;"></div>
<span class="t" style="top:385.18px;font-size:9px;color:#222;left:209.30px;transform:scaleX(0.9098);">More colors...</span>
<span class="t" style="top:401.38px;font-size:9px;color:#222;left:167.80px;transform:scaleX(0.8849);">Opacity</span>
<div class="a" style="left:200px;top:405px;width:101.2px;height:1px;background:#a0a0a0;"></div>
<div class="a" style="left:183.2px;top:422.3px;width:69px;height:2px;background:#e4e4e4;border-radius:1px;"></div>
<div class="a" style="left:187px;top:427.5px;width:1px;height:2.5px;background:#c8c8c8;"></div>
<div class="a" style="left:204px;top:427.5px;width:1px;height:2.5px;background:#c8c8c8;"></div>
<div class="a" style="left:220px;top:427.5px;width:1px;height:2.5px;background:#c8c8c8;"></div>
<div class="a" style="left:236px;top:427.5px;width:1px;height:2.5px;background:#c8c8c8;"></div>
<svg class="a" style="left:248px;top:418px;" width="7" height="12" viewBox="0 0 7 12"><path d="M0 0h7v8.500L3.500 12 0 8.500z" fill="#0a74d0"/></svg>
<div class="a" style="left:263px;top:415px;width:26px;height:15px;background:#fff;border:1px solid #666;"></div>
<span class="t" style="top:419.78px;font-size:9px;color:#222;left:265.80px;transform:scaleX(0.8819);">100%</span>
<span class="t" style="top:438.98px;font-size:9px;color:#222;left:167.80px;transform:scaleX(0.8886);">Effects</span>
<div class="a" style="left:197.3px;top:443px;width:104px;height:1px;background:#a0a0a0;"></div>
<span class="t" style="top:455.88px;font-size:9px;color:#222;left:179.70px;transform:scaleX(0.9012);">Border:</span>
<div class="a" style="left:215.7px;top:452.3px;width:73.5px;height:15px;background:#fff;border:1px solid #555;"></div>
<span class="t" style="top:455.88px;font-size:9px;color:#222;left:219.00px;transform:scaleX(0.9121);">Automatic</span>
<svg class="a" style="left:279px;top:458px;" width="7" height="4" viewBox="0 0 7 4"><path d="M0.300 0.300L3.500 3.500 6.700 0.300" fill="none" stroke="#444" stroke-width="1"/></svg>
<span class="t" style="top:474.78px;font-size:9px;color:#9a9a9a;left:179.70px;transform:scaleX(0.8900);">Halo:</span>
<div class="a" style="left:215.7px;top:471.7px;width:73.5px;height:14.3px;background:#fff;border:1px solid #cfcfcf;"></div>
<svg class="a" style="left:279px;top:477px;" width="7" height="4" viewBox="0 0 7 4"><path d="M0.300 0.300L3.500 3.500 6.700 0.300" fill="none" stroke="#bbb" stroke-width="1"/></svg>
<!-- s_showme -->
<div class="a" style="left:868px;top:47px;width:153px;height:418.5px;background:#f9f9f9;box-shadow:1px 2px 4px rgba(0,0,0,0.32);"></div>
<div class="a" style="left:937.5px;top:20px;width:83.5px;height:28px;background:#f9f9f9;box-shadow:1px 0px 3px rgba(0,0,0,0.28);border-radius:1px 1px 0 0;"></div>
<div class="a" style="left:938px;top:44px;width:82.5px;height:6px;background:#f9f9f9;"></div>
<svg class="a" style="left:946px;top:25.5px;" width="12" height="12" viewBox="0 0 12 12"><rect x="0" y="0.200" width="8.300" height="1.900" fill="#7b5d8e"/><rect x="0" y="3.300" width="11" height="1.900" fill="#6c9bd0"/><rect x="0" y="6.400" width="3.800" height="1.900" fill="#f2a065"/><rect x="0" y="9.500" width="6.200" height="1.900" fill="#e8536f"/></svg>
<span class="t" style="top:26.29px;font-size:11px;color:#444;left:961.60px;transform:scaleX(0.8854);">Show Me</span>
<div class="a" style="left:878px;top:58.4px;width:41.5px;height:31px;background:#fff;border:1px solid #e6e6e6;overflow:hidden;"><svg class="a" style="left:-1px;top:-0.5px;will-change:transform;" width="41.500" height="31" viewBox="0 0 41.500 31"><rect x="2.2" y="1.5" width="37.3" height="6.9" fill="#d9d9d9"/><rect x="2.2" y="8.4" width="37.3" height="6.8" fill="#fff"/><rect x="2.2" y="15.2" width="37.3" height="6.8" fill="#d9d9d9"/><rect x="2.2" y="22.0" width="37.3" height="6.0" fill="#fff"/><rect x="2.2" y="1.5" width="37.3" height="26.5" rx="0.8" fill="none" stroke="#aaa" stroke-width="0.9"/><rect x="4.2" y="4.8" width="3.0" height="0.9" fill="#777"/><rect x="4.2" y="11.9" width="4.5" height="0.9" fill="#777"/><rect x="4.2" y="18.9" width="2.5" height="0.9" fill="#777"/><g opacity="0.85"><text x="13" y="6.5" font-family="Liberation Serif,serif" font-size="3.6" fill="#333">1234</text><text x="26.2" y="6.5" font-family="Liberation Serif,serif" font-size="3.6" fill="#333">678</text><text x="13.3" y="13.4" font-family="Liberation Serif,serif" font-size="3.6" fill="#333">368</text><text x="26.2" y="13.4" font-family="Liberation Serif,serif" font-size="3.6" fill="#333">3014</text><text x="13" y="20.3" font-family="Liberation Serif,serif" font-size="3.6" fill="#333">2929</text><text x="26.2" y="20.3" font-family="Liberation Serif,serif" font-size="3.6" fill="#333">2508</text><text x="13.5" y="26.6" font-family="Liberation Serif,serif" font-size="3.6" fill="#333">971</text><text x="27" y="26.6" font-family="Liberation Serif,serif" font-size="3.6" fill="#333">927</text></g></svg></div>
<div class="a" style="left:923.2px;top:58.4px;width:41.5px;height:31px;background:#fff;border:1px solid #e6e6e6;overflow:hidden;"><svg class="a" style="left:-1px;top:-0.5px;" width="41.500" height="31" viewBox="0 0 41.500 31"><rect x="4.0" y="5.1" width="3.8" height="0.9" fill="#8c8c8c"/><rect x="4.0" y="12.7" width="3.8" height="0.9" fill="#8c8c8c"/><rect x="4.0" y="20.2" width="3.8" height="0.9" fill="#8c8c8c"/><rect x="10.0" y="2.5" width="5.5" height="5.5" fill="#98d6ae"/><rect x="17.5" y="2.5" width="4.5" height="4.5" fill="#f28e2b"/><rect x="26.0" y="2.5" width="5.5" height="5.5" fill="#4ea37f"/><rect x="33.5" y="3.0" width="3.0" height="3.0" fill="#98d6ae"/><rect x="10.0" y="12.0" width="5.5" height="5.5" fill="#98d6ae"/><rect x="17.5" y="12.5" width="3.0" height="3.0" fill="#f9a655"/><rect x="26.0" y="12.0" width="4.5" height="4.5" fill="#98d6ae"/><rect x="33.5" y="12.0" width="5.5" height="5.5" fill="#98d6ae"/><rect x="10.0" y="21.0" width="6.5" height="7.0" fill="#4ea37f"/><rect x="17.5" y="21.0" width="6.0" height="6.0" fill="#98d6ae"/><rect x="26.0" y="21.0" width="6.5" height="7.0" fill="#4ea37f"/><rect x="33.5" y="21.0" width="5.5" height="5.5" fill="#98d6ae"/></svg></div>
<div class="a" style="left:968.4px;top:58.4px;width:41.5px;height:31px;background:#fff;border:1px solid #e6e6e6;overflow:hidden;"><svg class="a" style="left:-1px;top:-0.5px;" width="41.500" height="31" viewBox="0 0 41.500 31"><rect x="2.5" y="2" width="6.5" height="27" fill="#fff" stroke="#e6e6e6" stroke-width="0.6"/><rect x="4.3" y="5.3" width="2.7" height="0.8" fill="#d0d0d0"/><rect x="4.3" y="12.4" width="2.7" height="0.8" fill="#d0d0d0"/><rect x="4.3" y="19.4" width="2.7" height="0.8" fill="#d0d0d0"/><rect x="10.5" y="2.0" width="14.0" height="7.5" fill="#cde5d8"/><rect x="25.0" y="2.0" width="14.5" height="7.5" fill="#dcefe5"/><rect x="10.5" y="10.0" width="14.0" height="7.0" fill="#fde3cc"/><rect x="25.0" y="10.0" width="14.5" height="7.0" fill="#cde5d8"/><rect x="10.5" y="17.5" width="14.0" height="7.0" fill="#dcefe5"/><rect x="25.0" y="17.5" width="14.5" height="7.0" fill="#dcefe5"/><rect x="10.5" y="25.0" width="14.0" height="4.0" fill="#cde5d8"/><rect x="25.0" y="25.0" width="14.5" height="4.0" fill="#dcefe5"/></svg></div>
<div class="a" style="left:878px;top:93.1px;width:41.5px;height:31px;background:#fff;border:2px solid #e27a45;overflow:hidden;border-radius:2px;"><svg class="a" style="left:-2px;top:-1.5px;" width="41.500" height="31" viewBox="0 0 41.500 31"><g fill="#dcdcdc"><polygon points="1,8.5 4,7.5 9,7 11,6.2 13,7 12.2,9 10.5,10 11,12 8.5,13.5 8,15 8.8,16.5 7.3,16 6,14.5 4.5,13 2.5,11.5 2,9.5"/><polygon points="13.4,6.5 15.5,5.8 17.4,6.3 16,8.2 14.2,7.8"/><polygon points="7.5,17 10,16.5 13.4,19.5 12,23 10,26.2 9.2,24 8.5,21 7,19"/><polygon points="18.5,9.5 20,7.5 24,7 28,6.7 34,7 39,8.5 38.5,10.5 36,11.5 35.5,14 33.5,15 32,17.5 30.5,15 28,17.5 26.5,14.5 24,13 21.5,12.5 19,12.5 18,11"/><polygon points="17.5,14 21,13.2 24,14 26.2,16.5 24.5,18.5 23.5,22 22,23.5 20.5,21 20,18 17.5,16.5"/><polygon points="34.5,21.5 36.5,20 39.3,20.8 39.8,23 38,24.4 35.5,23.5"/><polygon points="32.5,17.5 34.5,18 35.5,19.8 33.5,19.5"/></g><circle cx="2.6" cy="14.9" r="1.3" fill="#c4283a"/><circle cx="3.5" cy="12.1" r="0.8" fill="#cc3344"/><circle cx="8.3" cy="12.1" r="1" fill="#f5a09a"/><circle cx="7.9" cy="19.2" r="0.9" fill="#cc3344"/><circle cx="12.3" cy="20.3" r="1" fill="#f08a80"/><circle cx="18.5" cy="9" r="1" fill="#dd5555"/><circle cx="17.2" cy="11.9" r="1" fill="#f7a8a0"/><circle cx="21.1" cy="12.1" r="1.15" fill="#c4283a"/><circle cx="23.7" cy="16.5" r="0.8" fill="#e87060"/><circle cx="30.1" cy="13.4" r="1.9" fill="#c4283a"/><circle cx="33.7" cy="13" r="0.7" fill="#e05050"/><circle cx="33" cy="15.6" r="0.8" fill="#c83040"/><circle cx="34.1" cy="18.5" r="1.25" fill="#dd4a4a"/><circle cx="36.6" cy="22.8" r="0.9" fill="#c83040"/></svg></div>
<div class="a" style="left:923.2px;top:93.1px;width:41.5px;height:31px;background:#fff;border:1px solid #e6e6e6;overflow:hidden;"><svg class="a" style="left:-1px;top:-0.5px;" width="41.500" height="31" viewBox="0 0 41.500 31"><g fill="#fbd9d8"><polygon points="1,8.5 4,7.5 9,7 11,6.2 13,7 12.2,9 10.5,10 11,12 8.5,13.5 8,15 8.8,16.5 7.3,16 6,14.5 4.5,13 2.5,11.5 2,9.5"/><polygon points="13.4,6.5 15.5,5.8 17.4,6.3 16,8.2 14.2,7.8"/><polygon points="7.5,17 10,16.5 13.4,19.5 12,23 10,26.2 9.2,24 8.5,21 7,19"/><polygon points="18.5,9.5 20,7.5 24,7 28,6.7 34,7 39,8.5 38.5,10.5 36,11.5 35.5,14 33.5,15 32,17.5 30.5,15 28,17.5 26.5,14.5 24,13 21.5,12.5 19,12.5 18,11"/><polygon points="17.5,14 21,13.2 24,14 26.2,16.5 24.5,18.5 23.5,22 22,23.5 20.5,21 20,18 17.5,16.5"/><polygon points="34.5,21.5 36.5,20 39.3,20.8 39.8,23 38,24.4 35.5,23.5"/><polygon points="32.5,17.5 34.5,18 35.5,19.8 33.5,19.5"/></g></svg></div>
<div class="a" style="left:968.4px;top:93.1px;width:41.5px;height:31px;background:#fff;border:1px solid #e6e6e6;overflow:hidden;"><svg class="a" style="left:-1px;top:-0.5px;" width="41.500" height="31" viewBox="0 0 41.500 31"><path d="M20.7 15.6L9.90 15.60A10.8 10.8 0 0 1 20.70 4.80z" fill="#e0625c"/><path d="M20.7 15.6L20.70 4.80A10.8 10.8 0 0 1 28.34 7.96z" fill="#fb9a98"/><path d="M20.7 15.6L28.34 7.96A10.8 10.8 0 0 1 27.64 23.87z" fill="#4e7fab"/><path d="M20.7 15.6L27.64 23.87A10.8 10.8 0 0 1 9.90 15.60z" fill="#a5cdee"/></svg></div>
<div class="a" style="left:878px;top:127.8px;width:41.5px;height:31px;background:#fff;border:1px solid #e6e6e6;overflow:hidden;"><svg class="a" style="left:-1px;top:-0.5px;" width="41.500" height="31" viewBox="0 0 41.500 31"><rect x="4.2" y="4.9" width="18.0" height="2.8" fill="#4e7fab"/><rect x="4.2" y="11.0" width="33.1" height="2.9" fill="#4e7fab"/><rect x="4.2" y="17.2" width="8.9" height="2.8" fill="#4e7fab"/><rect x="4.2" y="23.1" width="26.5" height="2.9" fill="#4e7fab"/></svg></div>
<div class="a" style="left:923.2px;top:127.8px;width:41.5px;height:31px;background:#fff;border:1px solid #e6e6e6;overflow:hidden;"><svg class="a" style="left:-1px;top:-0.5px;" width="41.500" height="31" viewBox="0 0 41.500 31"><rect x="4.6" y="4.9" width="6.2" height="5.2" fill="#4e7fab"/><rect x="4.6" y="10.1" width="6.2" height="16.6" fill="#a5cdee"/><rect x="13.1" y="9.4" width="6.2" height="5.9" fill="#4e7fab"/><rect x="13.1" y="15.3" width="6.2" height="11.4" fill="#a5cdee"/><rect x="22.1" y="7.0" width="6.3" height="14.4" fill="#4e7fab"/><rect x="22.1" y="21.4" width="6.3" height="5.3" fill="#a5cdee"/><rect x="31.2" y="12.4" width="6.2" height="6.6" fill="#4e7fab"/><rect x="31.2" y="19.0" width="6.2" height="7.7" fill="#a5cdee"/></svg></div>
<div class="a" style="left:968.4px;top:127.8px;width:41.5px;height:31px;background:#fff;border:1px solid #e6e6e6;overflow:hidden;"><svg class="a" style="left:-1px;top:-0.5px;" width="41.500" height="31" viewBox="0 0 41.500 31"><rect x="13.6" y="0.5" width="0.5" height="30.0" fill="#e4e4e4"/><rect x="27.8" y="0.5" width="0.5" height="30.0" fill="#e4e4e4"/><rect x="3.2" y="20.0" width="3.1" height="10.5" fill="#4e7fab"/><rect x="7.2" y="13.2" width="3.1" height="17.3" fill="#a5cdee"/><rect x="17.6" y="8.0" width="2.9" height="22.5" fill="#4e7fab"/><rect x="21.2" y="16.2" width="3.1" height="14.3" fill="#a5cdee"/><rect x="31.4" y="23.0" width="2.9" height="7.5" fill="#4e7fab"/><rect x="35.2" y="12.4" width="3.2" height="18.1" fill="#a5cdee"/></svg></div>
<div class="a" style="left:878px;top:162.5px;width:41.5px;height:31px;background:#fff;border:1px solid #e6e6e6;overflow:hidden;"><svg class="a" style="left:-1px;top:-0.5px;" width="41.500" height="31" viewBox="0 0 41.500 31"><rect x="4.2" y="4.2" width="15.9" height="11.0" fill="#78a7d0"/><rect x="4.2" y="16.2" width="15.9" height="10.5" fill="#4e7fab"/><rect x="21.1" y="4.2" width="8.0" height="7.1" fill="#78a7d0"/><rect x="30.1" y="4.2" width="7.2" height="7.1" fill="#a5cdee"/><rect x="21.1" y="12.4" width="5.1" height="7.6" fill="#fb9f94"/><rect x="21.1" y="21.0" width="5.1" height="5.7" fill="#e15a50"/><rect x="27.1" y="12.4" width="5.0" height="7.0" fill="#78a7d0"/><rect x="33.1" y="12.4" width="4.2" height="7.0" fill="#a5cdee"/><rect x="27.1" y="21.0" width="5.0" height="5.7" fill="#a5cdee"/><rect x="33.1" y="21.0" width="4.2" height="2.2" fill="#3f6e9d"/><rect x="33.1" y="24.0" width="4.2" height="2.7" fill="#a5cdee"/></svg></div>
<div class="a" style="left:923.2px;top:162.5px;width:41.5px;height:31px;background:#fff;border:1px solid #e6e6e6;overflow:hidden;"><svg class="a" style="left:-1px;top:-0.5px;" width="41.500" height="31" viewBox="0 0 41.500 31"><circle cx="7.7" cy="7.7" r="3.7" fill="none" stroke="#a5cdee" stroke-width="0.9"/><circle cx="7.7" cy="11.3" r="3.7" fill="none" stroke="#4e7fab" stroke-width="0.9"/><circle cx="7.7" cy="21.8" r="3.7" fill="none" stroke="#4e7fab" stroke-width="0.9"/><circle cx="21.2" cy="8.4" r="3.7" fill="none" stroke="#4e7fab" stroke-width="0.9"/><circle cx="21.2" cy="19" r="3.7" fill="none" stroke="#4e7fab" stroke-width="0.9"/><circle cx="21.2" cy="22" r="3.7" fill="none" stroke="#78a7d0" stroke-width="0.9"/><circle cx="21.2" cy="30.2" r="3.7" fill="none" stroke="#a5cdee" stroke-width="0.9"/><circle cx="34.5" cy="8.4" r="3.7" fill="none" stroke="#8fbde3" stroke-width="0.9"/><circle cx="34.5" cy="14" r="3.7" fill="none" stroke="#a5cdee" stroke-width="0.9"/><circle cx="34.5" cy="25.7" r="3.7" fill="none" stroke="#a5cdee" stroke-width="0.9"/></svg></div>
<div class="a" style="left:968.4px;top:162.5px;width:41.5px;height:31px;background:#fff;border:1px solid #e6e6e6;overflow:hidden;"><svg class="a" style="left:-1px;top:-0.5px;" width="41.500" height="31" viewBox="0 0 41.500 31"><rect x="20.6" y="0.5" width="0.5" height="30.0" fill="#e4e4e4"/><circle cx="6.3" cy="10.5" r="2.7" fill="none" stroke="#a5cdee" stroke-width="0.9"/><circle cx="6.3" cy="7" r="2.7" fill="none" stroke="#4e7fab" stroke-width="0.9"/><circle cx="13.5" cy="10.1" r="2.7" fill="none" stroke="#4e7fab" stroke-width="0.9"/><circle cx="13.5" cy="19" r="2.7" fill="none" stroke="#a5cdee" stroke-width="0.9"/><circle cx="6.3" cy="24.9" r="2.7" fill="none" stroke="#a5cdee" stroke-width="0.9"/><circle cx="13.5" cy="26.3" r="2.7" fill="none" stroke="#4e7fab" stroke-width="0.9"/><circle cx="28.5" cy="7.5" r="2.7" fill="none" stroke="#a5cdee" stroke-width="0.9"/><circle cx="35.9" cy="13.8" r="2.7" fill="none" stroke="#78a7d0" stroke-width="0.9"/><circle cx="35.9" cy="10.3" r="2.7" fill="none" stroke="#4e7fab" stroke-width="0.9"/><circle cx="28.5" cy="24.9" r="2.7" fill="none" stroke="#a5cdee" stroke-width="0.9"/><circle cx="28.5" cy="21.8" r="2.7" fill="none" stroke="#4e7fab" stroke-width="0.9"/><circle cx="35.9" cy="23.2" r="2.7" fill="none" stroke="#a5cdee" stroke-width="0.9"/></svg></div>
<div class="a" style="left:878px;top:197.2px;width:41.5px;height:31px;background:#fff;border:1px solid #e6e6e6;overflow:hidden;"><svg class="a" style="left:-1px;top:-0.5px;" width="41.500" height="31" viewBox="0 0 41.500 31"><polyline points="3.7,8.4 8.9,4.5 16.6,14.8 24.3,9.6 30.7,14.3 38.4,10.5" fill="none" stroke="#fcd9bf" stroke-width="1.2" stroke-linejoin="round"/><polyline points="3.2,13.4 8.9,14.8 17.3,9.1 30,18.3 38.4,16.9" fill="none" stroke="#fde9d2" stroke-width="1.2" stroke-linejoin="round"/><polyline points="3.2,19 8.9,24.6 21.5,18 30.7,23.9 38.4,21.8" fill="none" stroke="#c6d7e7" stroke-width="1.2" stroke-linejoin="round"/></svg></div>
<div class="a" style="left:923.2px;top:197.2px;width:41.5px;height:31px;background:#fff;border:1px solid #e6e6e6;overflow:hidden;"><svg class="a" style="left:-1px;top:-0.5px;" width="41.500" height="31" viewBox="0 0 41.500 31"><rect x="21.0" y="0.5" width="0.4" height="30.0" fill="#e8e8e8"/><polyline points="2.8,12.7 7.7,13.8 13.4,8.7 18.3,9.3" fill="none" stroke="#fcd9bf" stroke-width="1.2" stroke-linejoin="round"/><polyline points="2.8,17.6 8.4,16.6 13.4,11.5 17.9,14.8" fill="none" stroke="#fde9d2" stroke-width="1.2" stroke-linejoin="round"/><polyline points="2.8,23.2 7.7,25 13.4,20.4 18.3,20.4" fill="none" stroke="#c6d7e7" stroke-width="1.2" stroke-linejoin="round"/><polyline points="23.6,12.4 28.4,7 33,10.1 38.4,9.1" fill="none" stroke="#fcd9bf" stroke-width="1.2" stroke-linejoin="round"/><polyline points="23.6,17.6 28.4,16.2 33,17.2 38.4,14.5" fill="none" stroke="#fde9d2" stroke-width="1.2" stroke-linejoin="round"/><polyline points="23.6,23.2 28.4,20.4 33,22.2 38.4,20.4" fill="none" stroke="#c6d7e7" stroke-width="1.2" stroke-linejoin="round"/></svg></div>
<div class="a" style="left:968.4px;top:197.2px;width:41.5px;height:31px;background:#fff;border:1px solid #e6e6e6;overflow:hidden;"><svg class="a" style="left:-1px;top:-0.5px;" width="41.500" height="31" viewBox="0 0 41.500 31"><rect x="2.5" y="4.0" width="1.5" height="0.4" fill="#ececec"/><rect x="38.3" y="4.0" width="1.2" height="0.4" fill="#ececec"/><rect x="2.5" y="8.5" width="1.5" height="0.4" fill="#ececec"/><rect x="38.3" y="8.5" width="1.2" height="0.4" fill="#ececec"/><rect x="2.5" y="13.0" width="1.5" height="0.4" fill="#ececec"/><rect x="38.3" y="13.0" width="1.2" height="0.4" fill="#ececec"/><rect x="2.5" y="17.5" width="1.5" height="0.4" fill="#ececec"/><rect x="38.3" y="17.5" width="1.2" height="0.4" fill="#ececec"/><rect x="2.5" y="22.0" width="1.5" height="0.4" fill="#ececec"/><rect x="38.3" y="22.0" width="1.2" height="0.4" fill="#ececec"/><rect x="2.5" y="26.3" width="1.5" height="0.4" fill="#ececec"/><rect x="38.3" y="26.3" width="1.2" height="0.4" fill="#ececec"/><polyline points="6.8,10.3 13.1,4.9 19.8,10.1 24.1,7.7 31.4,12.4 35.9,9.1" fill="none" stroke="#fcd9bf" stroke-width="1.2" stroke-linejoin="round"/><polyline points="6.8,17.2 13.1,14.3 19.8,21.8 24.1,19.3 31.4,22.8 35.9,17.2" fill="none" stroke="#c6d7e7" stroke-width="1.2" stroke-linejoin="round"/></svg></div>
<div class="a" style="left:878px;top:231.9px;width:41.5px;height:31px;background:#fff;border:1px solid #e6e6e6;overflow:hidden;"><svg class="a" style="left:-1px;top:-0.5px;" width="41.500" height="31" viewBox="0 0 41.500 31"><polygon points="2.1,16.2 10.7,5.3 26.4,15.5 39.8,11.5 39.8,28.6 2.1,28.6" fill="#c6d7e7"/><polygon points="2.1,17.6 10.7,11.5 26.4,21.4 39.8,13.8 39.8,28.6 2.1,28.6" fill="#fde0c7"/><polygon points="2.1,22.5 10.7,19.4 26.4,24.2 39.8,20.4 39.8,28.6 2.1,28.6" fill="#fdf1e2"/></svg></div>
<div class="a" style="left:923.2px;top:231.9px;width:41.5px;height:31px;background:#fff;border:1px solid #e6e6e6;overflow:hidden;"><svg class="a" style="left:-1px;top:-0.5px;" width="41.500" height="31" viewBox="0 0 41.500 31"><polygon points="1.8,16.2 6,5.3 13.4,15.5 20,11.5 20,28.6 1.8,28.6" fill="#c6d7e7"/><polygon points="1.8,17.6 6,11.5 13.4,21.4 20,13.8 20,28.6 1.8,28.6" fill="#fde0c7"/><polygon points="1.8,22.5 6,19.4 13.4,24.2 20,20.4 20,28.6 1.8,28.6" fill="#fdf1e2"/><polygon points="21.5,16.2 25.7,5.3 33.1,15.5 39.7,11.5 39.7,28.6 21.5,28.6" fill="#c6d7e7"/><polygon points="21.5,17.6 25.7,11.5 33.1,21.4 39.7,13.8 39.7,28.6 21.5,28.6" fill="#fde0c7"/><polygon points="21.5,22.5 25.7,19.4 33.1,24.2 39.7,20.4 39.7,28.6 21.5,28.6" fill="#fdf1e2"/></svg></div>
<div class="a" style="left:968.4px;top:231.9px;width:41.5px;height:31px;background:#fff;border:1px solid #e6e6e6;overflow:hidden;"><svg class="a" style="left:-1px;top:-0.5px;" width="41.500" height="31" viewBox="0 0 41.500 31"><rect x="2.5" y="4.0" width="1.5" height="0.4" fill="#ececec"/><rect x="38.3" y="4.0" width="1.2" height="0.4" fill="#ececec"/><rect x="2.5" y="8.5" width="1.5" height="0.4" fill="#ececec"/><rect x="38.3" y="8.5" width="1.2" height="0.4" fill="#ececec"/><rect x="2.5" y="13.0" width="1.5" height="0.4" fill="#ececec"/><rect x="38.3" y="13.0" width="1.2" height="0.4" fill="#ececec"/><rect x="2.5" y="17.5" width="1.5" height="0.4" fill="#ececec"/><rect x="38.3" y="17.5" width="1.2" height="0.4" fill="#ececec"/><rect x="2.5" y="22.0" width="1.5" height="0.4" fill="#ececec"/><rect x="38.3" y="22.0" width="1.2" height="0.4" fill="#ececec"/><rect x="2.5" y="26.3" width="1.5" height="0.4" fill="#ececec"/><rect x="38.3" y="26.3" width="1.2" height="0.4" fill="#ececec"/><rect x="7.0" y="15.9" width="4.0" height="12.7" fill="#c6d7e7"/><rect x="13.1" y="12.2" width="3.9" height="16.4" fill="#c6d7e7"/><rect x="19.1" y="18.7" width="3.8" height="9.9" fill="#c6d7e7"/><rect x="25.3" y="5.3" width="3.7" height="23.3" fill="#c6d7e7"/><rect x="31.4" y="15.5" width="3.8" height="13.1" fill="#c6d7e7"/><polyline points="7.7,12.9 14.5,7 20.8,15.8 27.1,9.8 34.2,15.5" fill="none" stroke="#fcd9bf" stroke-width="1.2" stroke-linejoin="round"/></svg></div>
<div class="a" style="left:878px;top:266.6px;width:41.5px;height:31px;background:#fff;border:1px solid #e6e6e6;overflow:hidden;"><svg class="a" style="left:-1px;top:-0.5px;" width="41.500" height="31" viewBox="0 0 41.500 31"><circle cx="16.2" cy="9.1" r="2.6" fill="none" stroke="#f9a655" stroke-width="1"/><circle cx="32.1" cy="10.3" r="2.6" fill="none" stroke="#f9a655" stroke-width="1"/><circle cx="10" cy="16.3" r="2.6" fill="none" stroke="#f9a655" stroke-width="1"/><circle cx="18.4" cy="19.4" r="2.6" fill="none" stroke="#f9a655" stroke-width="1"/><circle cx="5.8" cy="25.5" r="2.6" fill="none" stroke="#f9a655" stroke-width="1"/><path d="M23.2 5.3h6.400M26.4 2.0999999999999996v6.400" stroke="#4ea37f" stroke-width="0.900"/><path d="M20.1 13.8h6.400M23.3 10.600000000000001v6.400" stroke="#4ea37f" stroke-width="0.900"/><path d="M31.400000000000002 18.3h6.400M34.6 15.100000000000001v6.400" stroke="#4ea37f" stroke-width="0.900"/><path d="M23.2 22.9h6.400M26.4 19.7v6.400" stroke="#4ea37f" stroke-width="0.900"/><path d="M9.5 24h6.400M12.7 20.8v6.400" stroke="#4ea37f" stroke-width="0.900"/></svg></div>
<div class="a" style="left:923.2px;top:266.6px;width:41.5px;height:31px;background:#fff;border:1px solid #e6e6e6;overflow:hidden;"><svg class="a" style="left:-1px;top:-0.5px;" width="41.500" height="31" viewBox="0 0 41.500 31"><rect x="3.7" y="26.4" width="3.2" height="1.9" fill="#c8e4d6"/><rect x="7.5" y="22.6" width="3.2" height="5.7" fill="#c8e4d6"/><rect x="11.5" y="15.6" width="3.2" height="12.7" fill="#c8e4d6"/><rect x="15.6" y="8.4" width="3.2" height="19.9" fill="#c8e4d6"/><rect x="19.2" y="5.3" width="3.2" height="23.0" fill="#c8e4d6"/><rect x="23.0" y="8.4" width="3.2" height="19.9" fill="#c8e4d6"/><rect x="26.8" y="15.6" width="3.2" height="12.7" fill="#c8e4d6"/><rect x="30.6" y="22.6" width="3.2" height="5.7" fill="#c8e4d6"/><rect x="34.3" y="26.4" width="3.2" height="1.9" fill="#c8e4d6"/></svg></div>
<div class="a" style="left:968.4px;top:266.6px;width:41.5px;height:31px;background:#fff;border:1px solid #e6e6e6;overflow:hidden;"><svg class="a" style="left:-1px;top:-0.5px;" width="41.500" height="31" viewBox="0 0 41.500 31"><rect x="4.7" y="13.5" width="5.6" height="3.1" fill="#98d6ae"/><rect x="4.7" y="16.6" width="5.6" height="5.9" fill="#4ea37f"/><path d="M7.5 8.2V25M5.5 8.2h4M5.5 25h4" stroke="#3a3a3a" stroke-width="0.900" opacity="0.800"/><rect x="13.8" y="9.6" width="5.6" height="7.0" fill="#98d6ae"/><rect x="13.8" y="16.6" width="5.6" height="3.9" fill="#4ea37f"/><path d="M16.6 6V26.7M14.600000000000001 6h4M14.600000000000001 26.7h4" stroke="#3a3a3a" stroke-width="0.900" opacity="0.800"/><rect x="22.7" y="12.1" width="5.6" height="5.9" fill="#98d6ae"/><rect x="22.7" y="18.0" width="5.6" height="6.0" fill="#4ea37f"/><path d="M25.5 5.6V27.6M23.5 5.6h4M23.5 27.6h4" stroke="#3a3a3a" stroke-width="0.900" opacity="0.800"/><rect x="31.8" y="8.4" width="5.6" height="8.9" fill="#98d6ae"/><rect x="31.8" y="17.3" width="5.6" height="3.8" fill="#4ea37f"/><path d="M34.6 4.2V28.1M32.6 4.2h4M32.6 28.1h4" stroke="#3a3a3a" stroke-width="0.900" opacity="0.800"/></svg></div>
<div class="a" style="left:878px;top:301.3px;width:41.5px;height:31px;background:#fff;border:1px solid #e6e6e6;overflow:hidden;"><svg class="a" style="left:-1px;top:-0.5px;" width="41.500" height="31" viewBox="0 0 41.500 31"><rect x="2.8" y="2.8" width="6.5" height="5.6" fill="#c9e4d8"/><rect x="14.9" y="2.8" width="3.1" height="5.6" fill="#fcd9bf"/><rect x="18.5" y="2.8" width="3.0" height="5.6" fill="#fde9d2"/><rect x="26.9" y="2.8" width="1.1" height="5.6" fill="#fcd9bf"/><rect x="31.4" y="2.8" width="5.9" height="5.6" fill="#fde9d2"/><rect x="2.8" y="12.0" width="4.2" height="5.6" fill="#dcefe5"/><rect x="8.2" y="12.0" width="1.8" height="5.6" fill="#c9e4d8"/><rect x="13.4" y="12.0" width="2.8" height="5.6" fill="#c9e4d8"/><rect x="18.4" y="12.0" width="10.6" height="5.6" fill="#dcefe5"/><rect x="33.0" y="12.0" width="5.8" height="5.6" fill="#fcd9bf"/><rect x="2.8" y="21.5" width="1.2" height="5.9" fill="#c9e4d8"/><rect x="6.5" y="21.5" width="5.9" height="5.9" fill="#fde9d2"/><rect x="14.0" y="21.5" width="1.3" height="5.9" fill="#fcd9bf"/><rect x="17.3" y="21.5" width="2.7" height="5.9" fill="#dcefe5"/><rect x="24.6" y="21.5" width="5.2" height="5.9" fill="#c9e4d8"/><rect x="34.5" y="21.5" width="3.0" height="5.9" fill="#fde9d2"/></svg></div>
<div class="a" style="left:923.2px;top:301.3px;width:41.5px;height:31px;background:#fff;border:1px solid #e6e6e6;overflow:hidden;"><svg class="a" style="left:-1px;top:-0.5px;" width="41.500" height="31" viewBox="0 0 41.500 31"><rect x="3.2" y="3.9" width="30.3" height="5.2" fill="#e4e4e4"/><rect x="33.5" y="3.9" width="4.2" height="5.2" fill="#f3f3f3"/><rect x="3.2" y="5.1" width="19.0" height="2.9" fill="#4ea37f"/><rect x="24.4" y="3.9" width="1.1" height="5.2" fill="#444"/><rect x="3.2" y="12.7" width="22.1" height="5.6" fill="#e8e8e8"/><rect x="25.3" y="12.7" width="12.4" height="5.6" fill="#f3f3f3"/><rect x="3.2" y="14.0" width="30.3" height="3.2" fill="#4ea37f"/><rect x="29.8" y="12.7" width="0.9" height="5.6" fill="#333"/><rect x="3.2" y="21.8" width="19.0" height="5.6" fill="#e4e4e4"/><rect x="22.2" y="21.8" width="15.5" height="5.6" fill="#f3f3f3"/><rect x="3.2" y="23.2" width="15.8" height="3.1" fill="#4ea37f"/><rect x="34.2" y="21.8" width="1.2" height="5.6" fill="#888"/></svg></div>
<div class="a" style="left:968.4px;top:301.3px;width:41.5px;height:31px;background:#fff;border:1px solid #e6e6e6;overflow:hidden;"><svg class="a" style="left:-1px;top:-0.5px;" width="41.500" height="31" viewBox="0 0 41.500 31"><circle cx="11.3" cy="20.7" r="7.2" fill="#98d6ae"/><circle cx="19.1" cy="8" r="3.8" fill="#4ea37f"/><circle cx="11.7" cy="10.1" r="2.6" fill="#4ea37f"/><circle cx="26.4" cy="8.7" r="2.1" fill="#98d6ae"/><circle cx="33.8" cy="12.4" r="5.2" fill="#fdbe7d"/><circle cx="22.6" cy="16.2" r="4.3" fill="#fdbe7d"/><circle cx="29.7" cy="20.1" r="2.8" fill="#f28e2b"/><circle cx="22.2" cy="24.6" r="3.1" fill="#4ea37f"/></svg></div>
<span class="t" style="top:347.66px;font-size:9.5px;color:#444;left:879.40px;transform:scaleX(0.9614);">For</span>
<span class="t" style="top:347.66px;font-size:9.5px;color:#222;font-weight:bold;left:895.20px;transform:scaleX(0.9322);">symbol maps</span>
<span class="t" style="top:347.66px;font-size:9.5px;color:#444;left:954.20px;transform:scaleX(1.0992);">try</span>
<span class="t" style="top:366.86px;font-size:9.5px;color:#444;left:879.40px;transform:scaleX(0.8581);">1 geo</span>
<svg class="a" style="left:906.4px;top:367.3px;" width="9" height="9" viewBox="0 0 9 9"><circle cx="4.500" cy="4.500" r="3.900" fill="none" stroke="#555" stroke-width="0.900"/><ellipse cx="4.500" cy="4.500" rx="1.700" ry="3.900" fill="none" stroke="#555" stroke-width="0.700"/><path d="M0.600 4.500h7.800M1.200 2.500h6.600M1.200 6.500h6.600" stroke="#555" stroke-width="0.600"/></svg>
<div class="a" style="left:919.2px;top:364.6px;width:63.3px;height:14.8px;background:#4996b2;border-radius:7.400px;"></div>
<span class="t" style="top:367.36px;font-size:9.5px;color:#fff;left:927.60px;-webkit-text-stroke:0.2px #fff;">Dimension</span>
<span class="t" style="top:388.36px;font-size:9.5px;color:#444;left:879.40px;transform:scaleX(0.9790);">0 or more</span>
<div class="a" style="left:922.2px;top:385.7px;width:67.8px;height:14.9px;background:#4996b2;border-radius:7.400px;"></div>
<span class="t" style="top:388.56px;font-size:9.5px;color:#fff;left:930.50px;transform:scaleX(1.0054);-webkit-text-stroke:0.2px #fff;">Dimensions</span>
<span class="t" style="top:409.16px;font-size:9.5px;color:#444;left:879.40px;transform:scaleX(0.9719);">0 to 2</span>
<div class="a" style="left:904.7px;top:406.9px;width:59.8px;height:14.8px;background:#00b180;border-radius:7.400px;"></div>
<span class="t" style="top:409.66px;font-size:9.5px;color:#fff;left:913.00px;transform:scaleX(0.9877);-webkit-text-stroke:0.2px #fff;">Measures</span>
<span class="t" style="top:431.16px;font-size:9.5px;color:#999;left:879.40px;transform:scaleX(0.9659);">May use spatial measure in</span>
<span class="t" style="top:442.76px;font-size:9.5px;color:#999;left:879.40px;transform:scaleX(0.9672);">place of geo dimension</span>
<!-- s_bottom -->
<div class="a" style="left:0px;top:494px;width:1024px;height:23px;background:#e6e6e6;"></div>
<div class="a" style="left:0px;top:517px;width:1024px;height:3px;background:#ececec;border-top:1px solid #dedede;"></div>
<div class="a" style="left:747px;top:518px;width:1px;height:2px;background:#d4d4d4;"></div>
<div class="a" style="left:844px;top:518px;width:1px;height:2px;background:#d4d4d4;"></div>
<div class="a" style="left:864px;top:518px;width:1px;height:2px;background:#d4d4d4;"></div>
<div class="a" style="left:885px;top:518px;width:1px;height:2px;background:#d4d4d4;"></div>
<div class="a" style="left:920px;top:518px;width:1px;height:2px;background:#d4d4d4;"></div>
<div class="a" style="left:974px;top:518px;width:1px;height:2px;background:#d4d4d4;"></div>
<svg class="a" style="left:0.5px;top:501px;" width="7" height="10" viewBox="0 0 7 10"><path d="M0.800 2c0-1.700 5.400-1.700 5.400 0v6c0 1.700-5.400 1.700-5.400 0zM0.800 2c0 1.600 5.400 1.600 5.400 0" fill="none" stroke="#777" stroke-width="0.900"/></svg>
<span class="t" style="top:501.64px;font-size:10px;color:#8a8a8a;left:11.80px;transform:scaleX(0.9085);">Data Source</span>
<div class="a" style="left:92px;top:494px;width:41.6px;height:23px;background:#f6f6f6;"></div>
<span class="t" style="top:501.64px;font-size:10px;color:#555;font-weight:bold;left:97.10px;transform:scaleX(0.8743);">Sheet 1</span>
<div class="a" style="left:134px;top:494px;width:1px;height:23px;background:#dadada;"></div>
<div class="a" style="left:159px;top:494px;width:1px;height:23px;background:#dadada;"></div>
<div class="a" style="left:183px;top:494px;width:1px;height:23px;background:#dadada;"></div>
<div class="a" style="left:206px;top:494px;width:1px;height:23px;background:#dadada;"></div>
<svg class="a" style="left:141px;top:501px;" width="13" height="12" viewBox="0 0 13 12"><rect x="0.500" y="0.500" width="8.500" height="8" fill="none" stroke="#666" stroke-width="0.900"/><path d="M2.500 6.500V5M4.300 6.500V3.500M6.100 6.500V4.500" stroke="#888" stroke-width="0.800"/><rect x="6.500" y="6" width="7" height="7" fill="#e6e6e6"/><path d="M7.500 9.500h5M10 7v5" stroke="#333" stroke-width="1.300"/></svg>
<svg class="a" style="left:165px;top:501px;" width="13" height="12" viewBox="0 0 13 12"><path d="M0.500 0.500h8.500v8H0.500zM0.500 4.500h8.500M4.700 0.500v8" fill="none" stroke="#666" stroke-width="0.900"/><rect x="6.500" y="6" width="7" height="7" fill="#e6e6e6"/><path d="M7.500 9.500h5M10 7v5" stroke="#333" stroke-width="1.300"/></svg>
<svg class="a" style="left:189px;top:501px;" width="13" height="12" viewBox="0 0 13 12"><path d="M0.500 1.200c1.500-0.800 3-0.800 4.200 0.300 1.200-1.100 2.700-1.100 4.200-0.300v7c-1.500-0.800-3-0.800-4.200 0.300-1.200-1.100-2.700-1.100-4.200-0.300zM4.700 1.500v7" fill="none" stroke="#666" stroke-width="0.900"/><rect x="6.500" y="6" width="7" height="7" fill="#e6e6e6"/><path d="M7.500 9.500h5M10 7v5" stroke="#333" stroke-width="1.300"/></svg>
<span class="t" style="top:476.30px;font-size:15px;color:rgba(120,120,120,0.550);left:802.80px;">Activate Windows</span>
<span class="t" style="top:494.89px;font-size:11px;color:rgba(120,120,120,0.600);left:802.80px;transform:scaleX(1.0251);">Go to Settings to activate Windows.</span>
</body>
</html>
